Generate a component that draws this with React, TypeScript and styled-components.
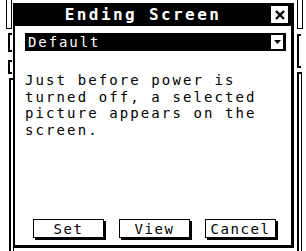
import React from "react";
import styled, { createGlobalStyle } from "styled-components";

const Global = createGlobalStyle`
  html, body { margin: 0; padding: 0; background: #fff; }
  body { width: 306px; height: 251px; overflow: hidden; }
`;

const Screen = styled.div`
  width: 306px;
  height: 251px;
  display: flex;
  background: #fff;
  font-family: "DejaVu Sans Mono", "Liberation Mono", monospace;
  color: #000;
`;

const SideStrip = styled.div<{ $w: number }>`
  width: ${(p) => p.$w}px;
  flex: none;
  display: flex;
  flex-direction: column;
  align-items: flex-start;
  gap: 4px;
`;

const TabBar = styled.div<{ $h: number; $w: number; $m: string }>`
  width: ${(p) => p.$w}px;
  height: ${(p) => p.$h}px;
  margin: ${(p) => p.$m};
  border: 1px solid #000;
  border-top: none;
  background: #fff;
`;

const Bracket = styled.div<{ $h: number; $m: string }>`
  width: 2px;
  height: ${(p) => p.$h}px;
  margin: ${(p) => p.$m};
  border: 2px solid #000;
  border-right: none;
`;

const Rail = styled.div<{ $m: string }>`
  flex: 1;
  width: 2px;
  margin: ${(p) => p.$m};
  border-left: 2px solid #000;
  border-right: 1px solid #000;
  border-top: 2px solid #000;
  background: #fff;
`;

const Dialog = styled.div`
  width: 281px;
  height: 245px;
  flex: none;
  margin-top: 3px;
  box-sizing: border-box;
  display: flex;
  flex-direction: column;
  border-left: 2px solid #000;
  border-right: 3px solid #000;
  border-bottom: 3px solid #000;
  background: #fff;
`;

const TitleBar = styled.div`
  height: 23px;
  background: #000;
  color: #fff;
  display: flex;
  align-items: center;
  padding-right: 3px;
`;

const Title = styled.div`
  flex: 1;
  text-align: center;
  font-weight: bold;
  font-size: 16px;
  letter-spacing: 2.4px;
`;

const CloseBox = styled.div`
  width: 17px;
  height: 17px;
  background: #fff;
  display: flex;
  align-items: center;
  justify-content: center;
`;

const Body = styled.div`
  flex: 1;
  display: flex;
  flex-direction: column;
  padding: 7px 5px 4px 10px;
`;

const Combo = styled.div`
  height: 18px;
  background: #000;
  color: #fff;
  display: flex;
  align-items: center;
  justify-content: space-between;
  padding: 0 3px;
  font-size: 14px;
  letter-spacing: 1.9px;
`;

const ArrowBox = styled.div`
  width: 12px;
  height: 14px;
  background: #fff;
  display: flex;
  align-items: center;
  justify-content: center;
`;

const Description = styled.div`
  margin-top: 21px;
  font-size: 14px;
  letter-spacing: 2.1px;
  line-height: 16.6px;
`;

const Line = styled.span`
  display: block;
  white-space: pre;
`;

const ButtonRow = styled.div`
  margin-top: auto;
  display: flex;
  gap: 15px;
  padding-left: 8px;
  margin-bottom: 3px;
`;

const Button = styled.div`
  width: 71px;
  height: 19px;
  box-sizing: border-box;
  border: 1px solid #000;
  box-shadow: 2px 2px 0 #000;
  display: flex;
  align-items: center;
  justify-content: center;
  font-size: 14px;
  letter-spacing: 1.6px;
`;

export default function App() {
  return (
    <>
      <Global />
      <Screen>
        <SideStrip $w={13}>
          <TabBar $w={4} $h={28} $m="0 0 0 6px" />
          <Bracket $h={15} $m="0 0 0 8px" />
          <Bracket $h={10} $m="4px 0 0 8px" />
          <Rail $m="0 0 0 9px" />
        </SideStrip>
        <Dialog>
          <TitleBar>
            <Title>Ending Screen</Title>
            <CloseBox>
              <svg width="12" height="12" viewBox="0 0 12 12">
                <path d="M2 2 L10 10 M10 2 L2 10" stroke="#000" strokeWidth="2.4" />
              </svg>
            </CloseBox>
          </TitleBar>
          <Body>
            <Combo>
              <span>Default</span>
              <ArrowBox>
                <svg width="9" height="6" viewBox="0 0 9 6">
                  <path d="M1 1 L8 1 L4.5 5 Z" fill="#000" />
                </svg>
              </ArrowBox>
            </Combo>
            <Description>
              <Line>Just before power is</Line>
              <Line>turned off, a selected</Line>
              <Line>picture appears on the</Line>
              <Line>screen.</Line>
            </Description>
            <ButtonRow>
              <Button>Set</Button>
              <Button>View</Button>
              <Button>Cancel</Button>
            </ButtonRow>
          </Body>
        </Dialog>
        <SideStrip $w={12}>
          <TabBar $w={4} $h={28} $m="0 0 0 3px" />
          <Bracket $h={30} $m="1px 0 0 3px" />
          <Rail $m="0 0 0 3px" />
        </SideStrip>
      </Screen>
    </>
  );
}
